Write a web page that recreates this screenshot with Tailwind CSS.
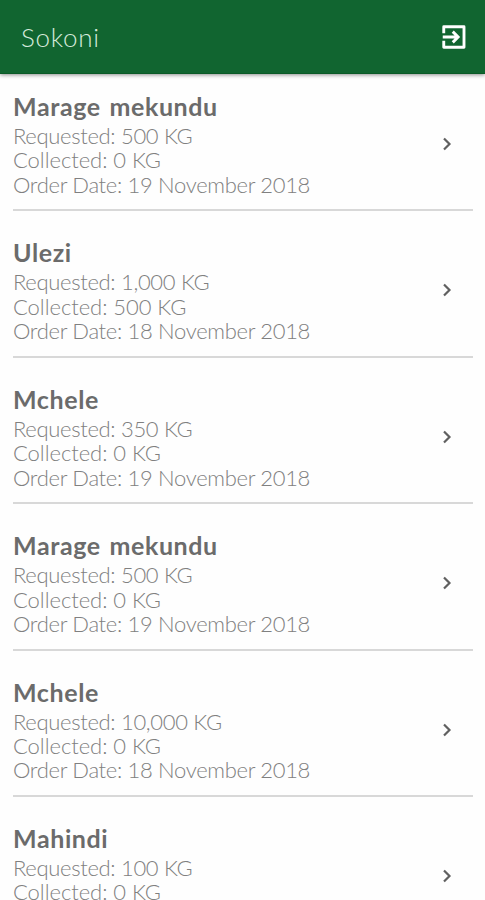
<!DOCTYPE html>
<html lang="en">
<head>
    <meta charset="UTF-8">
    <meta name="viewport" content="width=device-width, initial-scale=1.0">
    <title>Sokoni</title>
    <script src="https://cdn.jsdelivr.net/npm/@tailwindcss/browser@4"></script>
</head>
<body class="bg-[#fefefe] font-['Lato',sans-serif] h-screen overflow-hidden flex flex-col">
    <header class="relative z-10 shrink-0 h-[74px] pl-[21px] pr-[16px] flex items-center justify-between bg-[#116530] border-b border-[#0b5a27] shadow-[0_1px_4px_rgba(0,0,0,0.45)]">
        <h1 class="text-[26px] leading-8 font-light tracking-[0.7px] text-[#d5eadb]">Sokoni</h1>
        <button aria-label="Log out">
            <svg class="w-[30px] h-[30px]" viewBox="0 0 24 24" fill="none" stroke="white" stroke-width="2.3">
                <path d="M3.8 9V3.8h16.2v16.4H3.8V15" stroke-linejoin="round" />
                <path d="M3 12h12M11 7.7l4.3 4.3-4.3 4.3" />
            </svg>
        </button>
    </header>

    <main id="orders" class="flex-1 min-h-0 overflow-hidden pl-[13px] pr-[12px] -mt-[9px]"></main>

    <script>
        const orders = [
            { name: "Marage mekundu", requested: "500", collected: "0", date: "19 November 2018" },
            { name: "Ulezi", requested: "1,000", collected: "500", date: "18 November 2018" },
            { name: "Mchele", requested: "350", collected: "0", date: "19 November 2018" },
            { name: "Marage mekundu", requested: "500", collected: "0", date: "19 November 2018" },
            { name: "Mchele", requested: "10,000", collected: "0", date: "18 November 2018" },
            { name: "Mahindi", requested: "100", collected: "0" },
        ];

        document.getElementById('orders').innerHTML = orders.map(order => `
            <div class="h-[146.4px] pt-[25px] flex items-start justify-between border-b-2 border-[#d8d8d8]">
                <div class="text-[22px] leading-[24.4px] font-light tracking-[-0.32px] text-[#808080] whitespace-nowrap">
                    <h2 class="text-[25px] leading-8 mb-[2px] font-bold tracking-[0.6px] [word-spacing:2px] text-[#6b6b6b]">${order.name}</h2>
                    <p>Requested: ${order.requested} KG</p>
                    <p class="tracking-[-0.05px]">Collected: ${order.collected} KG</p>
                    ${order.date ? `<p>Order Date: ${order.date}</p>` : ''}
                </div>
                <svg class="w-[24px] h-[24px] mt-[42px] mr-[14px]" viewBox="0 0 24 24" fill="none" stroke="#606060" stroke-width="2.2">
                    <path d="M9 6.5l5.5 5.5L9 17.5" />
                </svg>
            </div>`).join('');
    </script>
</body>
</html>
